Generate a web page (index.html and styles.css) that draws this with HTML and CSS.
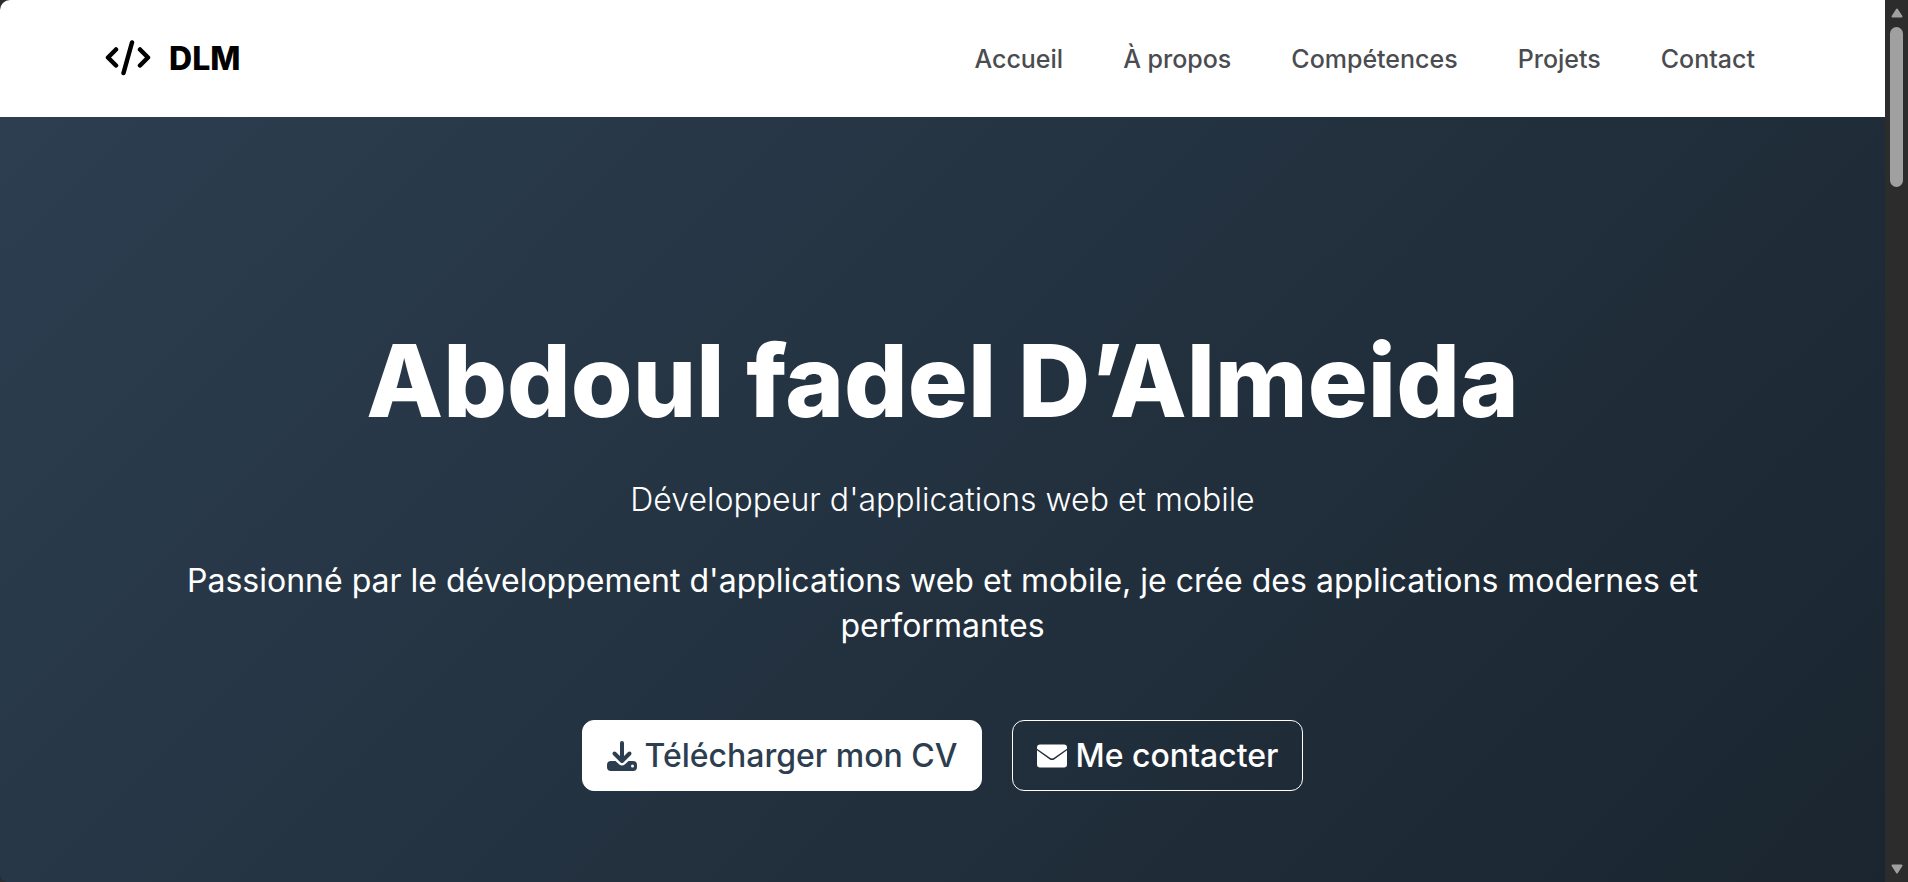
FILE: index.html
```
<!DOCTYPE html>
<html lang="fr">
<head>
  <meta charset="UTF-8">
  <meta name="viewport" content="width=device-width, initial-scale=1.0">
  <title>DLM - Portfolio</title>
  <link rel="stylesheet" href="styles.css">
</head>
<body>
  <div class="page">
    <header class="header">
      <a href="#accueil" class="logo">
        <svg class="logo-icon" viewBox="0 0 46 38" aria-hidden="true">
          <path d="M11 9.500 3 17.500 11 25.500M35 9.500 43 17.500 35 25.500M27 2.500 18.500 33"/>
        </svg>
        <span>DLM</span>
      </a>
      <nav>
        <ul class="nav-links">
          <li><a href="#accueil">Accueil</a></li>
          <li><a href="#apropos">À propos</a></li>
          <li><a href="#competences">Compétences</a></li>
          <li><a href="#projets">Projets</a></li>
          <li><a href="#contact">Contact</a></li>
        </ul>
      </nav>
    </header>

    <main class="hero" id="accueil">
      <h1>Abdoul fadel D’Almeida</h1>
      <h2>Développeur d'applications web et mobile</h2>
      <p>Passionné par le développement d'applications web et mobile, je crée des applications modernes et performantes</p>
      <div class="hero-buttons">
        <a href="#cv" class="btn btn-primary">
          <svg class="btn-icon" viewBox="0 0 30 30" aria-hidden="true">
            <path class="line" d="M15 2V20M7.500 12.500 15 20 22.500 12.500"/>
            <path fill-rule="evenodd" d="M4 20H8.500L12 23.300Q15 25.800 18 23.300L21.500 20H26Q30 20 30 24V26Q30 30 26 30H4Q0 30 0 26V24Q0 20 4 20ZM25.500 23.500A1.500 1.500 0 1 0 25.500 26.500A1.500 1.500 0 1 0 25.500 23.500Z"/>
          </svg>
          Télécharger mon CV
        </a>
        <a href="#contact" class="btn btn-secondary">
          <svg class="btn-icon" viewBox="0 0 30 30" aria-hidden="true">
            <path d="M3 3.500H27Q30 3.500 30 6.500V7.700L17 16.800Q15 18.200 13 16.800L0 7.700V6.500Q0 3.500 3 3.500Z"/>
            <path d="M0 9.300 12.500 18.200Q15 19.900 17.500 18.200L30 9.300V23.500Q30 26.500 27 26.500H3Q0 26.500 0 23.500Z"/>
          </svg>
          Me contacter
        </a>
      </div>
    </main>
  </div>

  <div class="scrollbar" aria-hidden="true">
    <svg class="arrow" viewBox="0 0 12 10"><path d="M6 1.500 10.500 8.500H1.500Z"/></svg>
    <div class="thumb"></div>
    <svg class="arrow arrow-down" viewBox="0 0 12 10"><path d="M6 8.500 10.500 1.500H1.500Z"/></svg>
  </div>
</body>
</html>
```
FILE: styles.css
```
* {
  margin: 0;
  padding: 0;
  box-sizing: border-box;
}

body {
  display: flex;
  min-height: 100vh;
  background-color: #2c2c2c;
  font-family: Inter, "Open Sans", sans-serif;
}

a {
  text-decoration: none;
}

.page {
  flex: 1;
  display: flex;
  flex-direction: column;
  border-radius: 10px 0 0 8px;
  overflow: hidden;
}

/* Header */
.header {
  display: flex;
  justify-content: space-between;
  align-items: center;
  height: 117px;
  padding: 0 130px 0 105px;
  background-color: #fff;
}

.logo {
  display: flex;
  align-items: center;
  gap: 18px;
  color: #000;
  font-size: 32px;
  font-weight: 800;
}

.logo-icon {
  width: 46px;
  height: 38px;
  fill: none;
  stroke: #000;
  stroke-width: 4.5;
  stroke-linecap: round;
  stroke-linejoin: round;
}

.nav-links {
  display: flex;
  gap: 60px;
  list-style: none;
}

.nav-links a {
  color: #4a4c50;
  font-size: 25px;
  font-weight: 500;
}

/* Hero */
.hero {
  flex: 1;
  display: flex;
  flex-direction: column;
  align-items: center;
  padding: 192px 180px 91px;
  background: linear-gradient(135deg, #2c3e50, #1a252f);
  color: #fff;
  text-align: center;
}

.hero h1 {
  margin-bottom: 24px;
  font-size: 100px;
  font-weight: 800;
  line-height: 144px;
}

.hero h2 {
  margin-bottom: 36px;
  font-size: 32px;
  font-weight: 300;
  line-height: 45px;
}

.hero p {
  margin-bottom: 72px;
  font-size: 32px;
  line-height: 45px;
}

.hero-buttons {
  display: flex;
  gap: 30px;
}

.btn {
  display: flex;
  align-items: center;
  gap: 8px;
  height: 71px;
  padding: 0 24px;
  border: 1px solid #fff;
  border-radius: 12px;
  font-size: 32px;
  font-weight: 500;
}

.btn-icon {
  width: 30px;
  height: 30px;
  fill: currentColor;
}

.btn-icon .line {
  fill: none;
  stroke: currentColor;
  stroke-width: 4;
  stroke-linecap: round;
  stroke-linejoin: round;
}

.btn-primary {
  background-color: #fff;
  color: #2c3e50;
}

.btn-secondary {
  color: #fff;
}

/* Scrollbar */
.scrollbar {
  display: flex;
  flex-direction: column;
  align-items: center;
  width: 23px;
  padding: 8px 0;
}

.arrow {
  width: 12px;
  height: 10px;
  fill: #a0a0a0;
  stroke: #a0a0a0;
  stroke-width: 2;
  stroke-linejoin: round;
}

.arrow-down {
  margin-top: auto;
}

.thumb {
  width: 13px;
  height: 160px;
  margin-top: 9px;
  border-radius: 7px;
  background-color: #a0a0a0;
}
```
